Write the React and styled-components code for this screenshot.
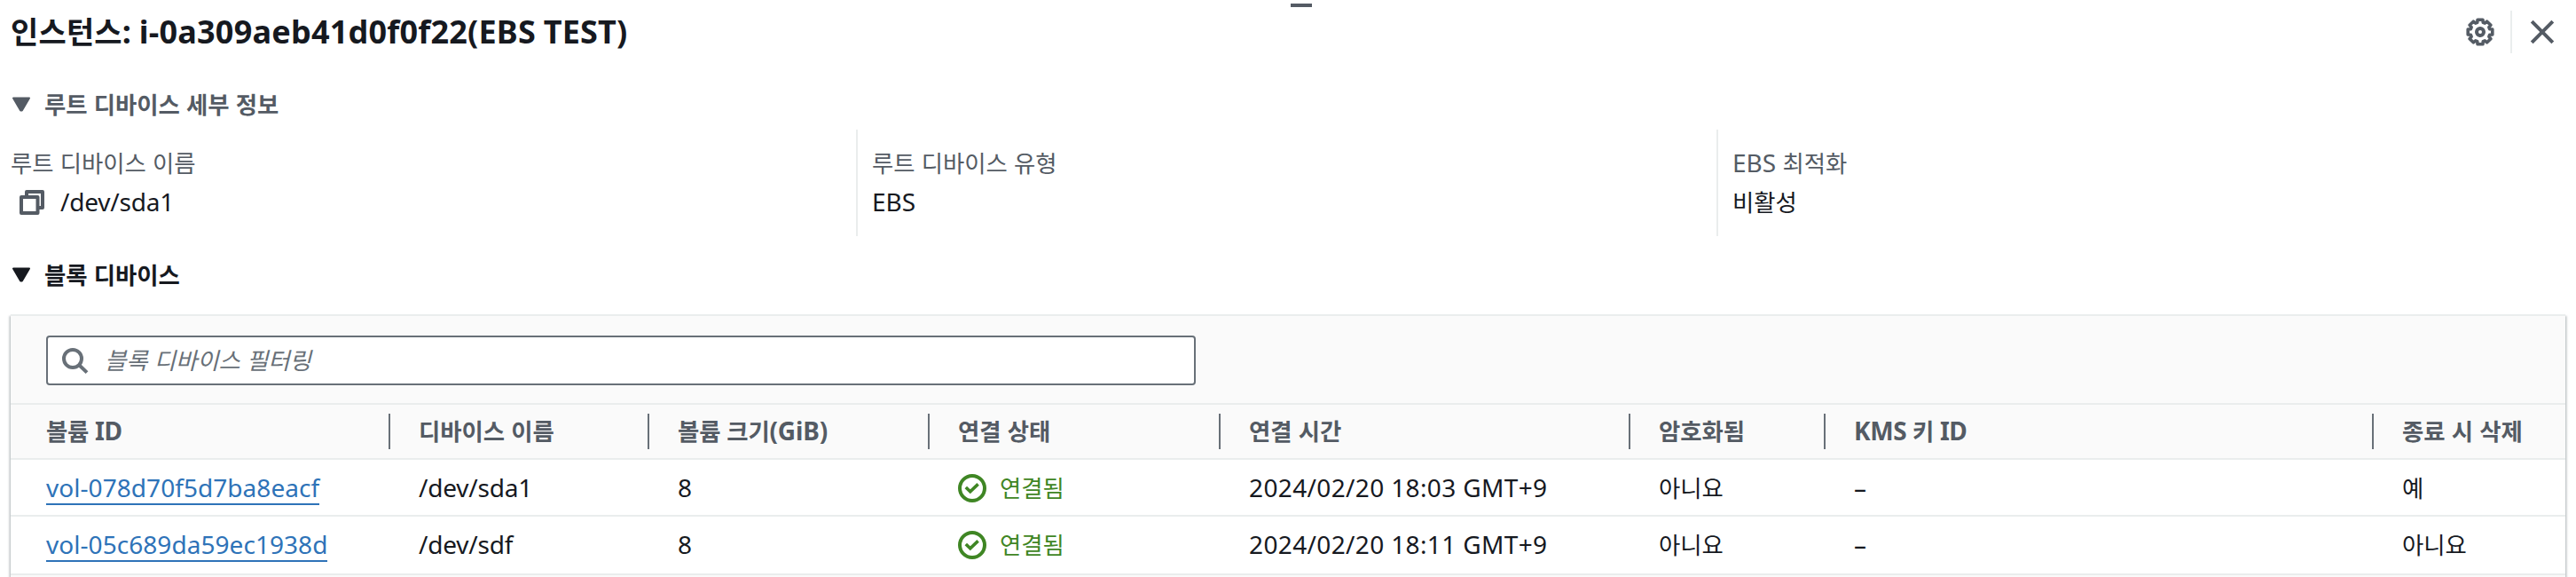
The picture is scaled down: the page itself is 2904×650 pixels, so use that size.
import React from "react";
import styled, { createGlobalStyle } from "styled-components";

const color = {
  text: "#16191f",
  muted: "#545b64",
  outline: "#687078",
  line: "#eaeded",
  panel: "#fafafa",
  link: "#2e73b8",
  success: "#3f8624",
};

const GlobalStyle = createGlobalStyle`
  html, body {
    margin: 0;
    background: #fff;
    overflow: hidden;
  }
  *, *::before, *::after { box-sizing: border-box; }
`;

const Panel = styled.main`
  position: relative;
  width: 2904px;
  height: 650px;
  overflow: hidden;
  background: #fff;
  color: ${color.text};
  font-family: "Noto Sans", "Noto Sans CJK KR", sans-serif;
  font-size: 28px;
  line-height: 44px;
  white-space: nowrap;
`;

const ResizeHandle = styled.div`
  position: absolute;
  top: 4px;
  left: 1455px;
  width: 24px;
  height: 4px;
  background: ${color.muted};
`;

const Header = styled.header`
  display: flex;
  align-items: center;
  justify-content: space-between;
  height: 72px;
  padding: 0 22px 0 12px;
`;

const Title = styled.h1`
  margin: 0;
  font-size: 36px;
  line-height: 48px;
  font-weight: 700;
  letter-spacing: 0.22px;
  word-spacing: -1px;
`;

const Actions = styled.div`
  display: flex;
  align-items: center;
  gap: 18px;
  color: ${color.muted};
`;

const ActionDivider = styled.span`
  width: 2px;
  height: 48px;
  background: ${color.line};
`;

const IconButton = styled.button`
  display: flex;
  padding: 0;
  border: 0;
  background: none;
  color: inherit;
`;

const Icon = styled.svg`
  flex: none;
  display: block;
  width: ${(p) => p.$size || 32}px;
  height: ${(p) => p.$size || 32}px;
  margin-top: ${(p) => p.$drop || 0}px;
`;

const SectionTitle = styled.h2`
  display: flex;
  align-items: center;
  gap: 14px;
  height: 44px;
  margin: ${(p) => p.$top}px 0 0;
  padding-left: 12px;
  font-size: 28px;
  line-height: 44px;
  font-weight: 700;
  color: ${(p) => (p.$muted ? color.muted : color.text)};
`;

const Details = styled.dl`
  display: grid;
  grid-template-columns: 965px 970px 1fr;
  height: 120px;
  margin: 7px 0 0;
`;

const Detail = styled.div`
  padding: 15px 0 0 ${(p) => (p.$first ? 12 : 16)}px;
  border-left: ${(p) => (p.$first ? "0" : `2px solid ${color.line}`)};
`;

const DetailLabel = styled.dt`
  height: 44px;
  color: ${color.muted};
`;

const DetailValue = styled.dd`
  display: flex;
  align-items: center;
  gap: 16px;
  height: 44px;
  margin: 0;
  padding-left: ${(p) => (p.$copy ? 8 : 0)}px;
  letter-spacing: ${(p) => (p.$copy ? -0.2 : 0)}px;
`;

const CopyGlyph = styled.span`
  display: flex;
  color: ${color.muted};
`;

const Card = styled.section`
  width: 2880px;
  height: 320px;
  margin: 23px 0 0 12px;
  border-top: 2px solid ${color.line};
  background: ${color.panel};
  box-shadow:
    0 2px 2px 0 rgba(0, 28, 36, 0.3),
    2px 2px 2px 0 rgba(0, 28, 36, 0.15),
    -2px 2px 2px 0 rgba(0, 28, 36, 0.15);
`;

const Toolbar = styled.div`
  height: 100px;
  padding: 22px 40px 20px;
  border-bottom: 2px solid ${color.line};
`;

const SearchBox = styled.label`
  display: flex;
  align-items: center;
  gap: 18px;
  width: 1296px;
  height: 56px;
  padding-left: 14px;
  border: 2px solid ${color.outline};
  border-radius: 4px;
  background: #fff;
  color: ${color.outline};
`;

const SearchInput = styled.input`
  flex: 1;
  height: 44px;
  padding: 0;
  border: 0;
  outline: 0;
  background: transparent;
  font: inherit;
  font-size: 26.4px;
  word-spacing: 0.3px;
  &::placeholder {
    color: ${color.outline};
    font-style: italic;
    opacity: 1;
  }
`;

const Row = styled.div`
  display: grid;
  grid-template-columns: 428px 292px 316px 328px 462px 220px 618px 1fr;
  height: ${(p) => p.$height}px;
  padding-bottom: ${(p) => (p.$last ? 2 : 0)}px;
  border-bottom: 2px solid ${color.line};
  background: ${(p) => (p.$head ? color.panel : "#fff")};
`;

const Cell = styled.div`
  display: flex;
  align-items: center;
  padding-left: 32px;
  letter-spacing: ${(p) => p.$tracking || 0}px;
  &:first-child { padding-left: 40px; }
`;

const HeadCell = styled(Cell)`
  height: 40px;
  margin-top: 10px;
  padding-bottom: 2px;
  border-right: 2px solid ${color.outline};
  font-weight: 700;
  color: ${color.muted};
  &:last-child { border-right: 0; }
`;

const VolumeLink = styled.a`
  margin-top: 2px;
  line-height: 36px;
  border-bottom: 2px solid ${color.link};
  color: ${color.link};
  text-decoration: none;
`;

const Status = styled.span`
  display: flex;
  align-items: center;
  gap: 15px;
  color: ${color.success};
`;

const Hangul = styled.span`
  font-size: 0.943em;
  line-height: 1;
  word-spacing: 0.3px;
`;

/* Hangul runs are set slightly smaller than the Latin text beside them. */
const Text = ({ children }) => (
  <span>
    {children
      .split(/([가-힣]+(?: [가-힣]+)*)/)
      .filter(Boolean)
      .map((run, i) => (/[가-힣]/.test(run) ? <Hangul key={i}>{run}</Hangul> : run))}
  </span>
);

const gearPath = (() => {
  const points = [];
  for (let k = 0; k < 8; k += 1) {
    [[-17, 11.2], [-12, 14.1], [12, 14.1], [17, 11.2]].forEach(([offset, r]) => {
      const a = ((k * 45 + offset) * Math.PI) / 180;
      points.push(`${(16 + r * Math.sin(a)).toFixed(2)} ${(16 - r * Math.cos(a)).toFixed(2)}`);
    });
  }
  return `M${points.join("L")}Z`;
})();

const GearIcon = () => (
  <Icon viewBox="0 0 32 32" fill="none" stroke="currentColor" strokeWidth="3.6" strokeLinejoin="round">
    <path d={gearPath} />
    <circle cx="16" cy="16" r="4" strokeWidth="4" />
  </Icon>
);

const CloseIcon = () => (
  <Icon viewBox="0 0 32 32" fill="none" stroke="currentColor" strokeWidth="4">
    <path d="M4.2 4.2 27.8 27.8M27.8 4.2 4.2 27.8" />
  </Icon>
);

const CaretIcon = () => (
  <Icon $size={24} $drop={2} viewBox="0 0 24 24" fill="currentColor" stroke="currentColor" strokeWidth="2" strokeLinejoin="round">
    <path d="M3 4.5H21L12.8 18.5H11.2Z" />
  </Icon>
);

const CopyIcon = () => (
  <Icon $drop={2} viewBox="0 0 32 32" fill="none" stroke="currentColor" strokeWidth="4" strokeLinejoin="round">
    <path d="M10 9V4H28V22H23" />
    <rect x="4" y="10" width="18.5" height="18" />
  </Icon>
);

const SearchIcon = () => (
  <Icon viewBox="0 0 32 32" fill="none" stroke="currentColor" strokeWidth="4">
    <circle cx="14" cy="14" r="10" />
    <path d="M21 21 30 29.6" />
  </Icon>
);

const CheckIcon = () => (
  <Icon $drop={2} viewBox="0 0 16 16" fill="none" stroke="currentColor" strokeWidth="2">
    <circle cx="8" cy="8" r="7" />
    <path d="M4.4 7.5 6.9 9.9 11.3 5.7" strokeWidth="1.8" />
  </Icon>
);

const columns = [
  ["볼륨 ID", -0.3],
  ["디바이스 이름"],
  ["볼륨 크기(GiB)", -0.15],
  ["연결 상태"],
  ["연결 시간"],
  ["암호화됨"],
  ["KMS 키 ID", -0.4],
  ["종료 시 삭제"],
];

const volumes = [
  { id: "vol-078d70f5d7ba8eacf", device: "/dev/sda1", time: "2024/02/20 18:03 GMT+9", remove: "예" },
  { id: "vol-05c689da59ec1938d", device: "/dev/sdf", time: "2024/02/20 18:11 GMT+9", remove: "아니요" },
];

export default function App() {
  return (
    <Panel>
      <GlobalStyle />
      <ResizeHandle />
      <Header>
        <Title><Text>인스턴스: i-0a309aeb41d0f0f22(EBS TEST)</Text></Title>
        <Actions>
          <IconButton aria-label="설정"><GearIcon /></IconButton>
          <ActionDivider />
          <IconButton aria-label="닫기"><CloseIcon /></IconButton>
        </Actions>
      </Header>

      <SectionTitle $top={23} $muted>
        <CaretIcon />
        <Text>루트 디바이스 세부 정보</Text>
      </SectionTitle>
      <Details>
        <Detail $first>
          <DetailLabel><Text>루트 디바이스 이름</Text></DetailLabel>
          <DetailValue $copy>
            <CopyGlyph><CopyIcon /></CopyGlyph>
            <Text>/dev/sda1</Text>
          </DetailValue>
        </Detail>
        <Detail>
          <DetailLabel><Text>루트 디바이스 유형</Text></DetailLabel>
          <DetailValue><Text>EBS</Text></DetailValue>
        </Detail>
        <Detail>
          <DetailLabel><Text>EBS 최적화</Text></DetailLabel>
          <DetailValue><Text>비활성</Text></DetailValue>
        </Detail>
      </Details>

      <SectionTitle $top={21}>
        <CaretIcon />
        <Text>블록 디바이스</Text>
      </SectionTitle>
      <Card>
        <Toolbar>
          <SearchBox>
            <SearchIcon />
            <SearchInput placeholder="블록 디바이스 필터링" />
          </SearchBox>
        </Toolbar>
        <Row $head $height={62}>
          {columns.map(([label, tracking]) => (
            <HeadCell key={label} $tracking={tracking}><Text>{label}</Text></HeadCell>
          ))}
        </Row>
        {volumes.map((v, i) => (
          <Row key={v.id} $height={i === 0 ? 64 : 66} $last={i === volumes.length - 1}>
            <Cell $tracking={0.05}><VolumeLink>{v.id}</VolumeLink></Cell>
            <Cell $tracking={-0.2}>{v.device}</Cell>
            <Cell>8</Cell>
            <Cell>
              <Status><CheckIcon /><Text>연결됨</Text></Status>
            </Cell>
            <Cell $tracking={0.36}>{v.time}</Cell>
            <Cell><Text>아니요</Text></Cell>
            <Cell>–</Cell>
            <Cell><Text>{v.remove}</Text></Cell>
          </Row>
        ))}
      </Card>
    </Panel>
  );
}
